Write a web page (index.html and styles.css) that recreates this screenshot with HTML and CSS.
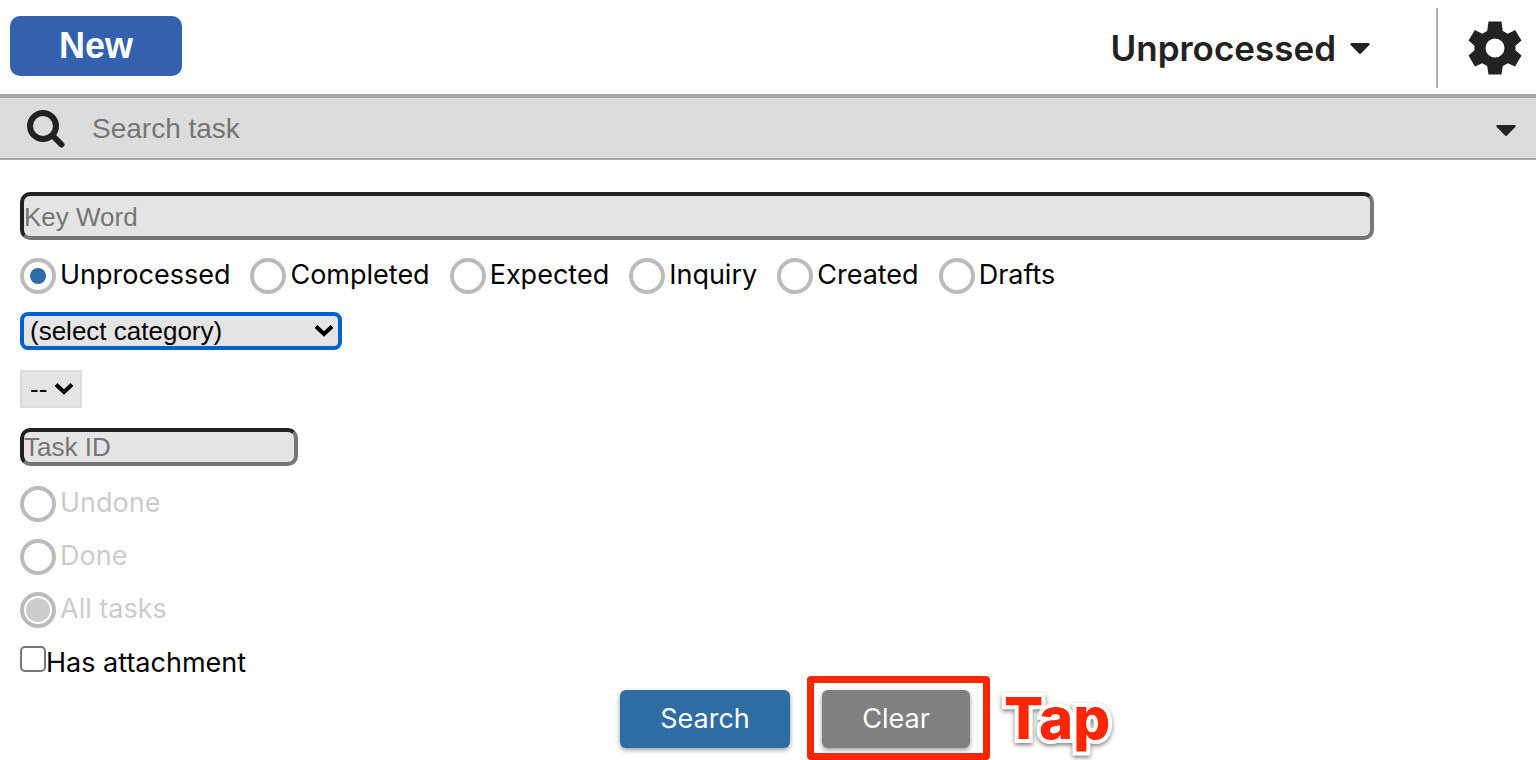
FILE: index.html
```html
<!DOCTYPE html>
<html lang="en">
<head>
<meta charset="utf-8">
<title>Tasks</title>
<link rel="stylesheet" href="styles.css">
</head>
<body>
<header class="topbar">
  <button class="new-button" type="button">New</button>
  <button class="folder-button" type="button">Unprocessed
    <svg class="caret" viewBox="0 0 20 11" aria-hidden="true"><path d="M1.500 0h17a1.200 1.200 0 0 1 .8 2.100l-8.300 8.400a1.500 1.500 0 0 1-2 0L.7 2.100A1.200 1.200 0 0 1 1.500 0z"/></svg>
  </button>
  <button class="settings-button" type="button" aria-label="Settings">
    <svg class="gear" viewBox="0 0 54 54" aria-hidden="true"><path fill-rule="evenodd" d="M20.500 0.500h13l1.300 9.500 5 2.800 7.300-3.700 6.400 10.400-6 5.200v4.600l6 5.200-6.400 10.900-7.300-3.100-5 2.700-1.300 8.500h-13l-1.300-8.500-5-2.700-7.300 3.100-6.400-10.900 6-5.200v-4.600l-6-5.200 6.400-10.400 7.300 3.700 5-2.800zM27 17.500a9.500 9.500 0 1 0 0 19a9.500 9.500 0 1 0 0-19z"/></svg>
  </button>
</header>

<div class="searchbar">
  <svg class="magnifier" viewBox="0 0 40 40" aria-hidden="true"><circle cx="17" cy="17" r="13"/><path d="M27 27l8.500 8.500"/></svg>
  <input class="search-input" type="text" placeholder="Search task" aria-label="Search task">
  <button class="expand-button" type="button" aria-label="Search options">
    <svg class="caret" viewBox="0 0 20 11" aria-hidden="true"><path d="M1.500 0h17a1.200 1.200 0 0 1 .8 2.100l-8.300 8.400a1.500 1.500 0 0 1-2 0L.7 2.100A1.200 1.200 0 0 1 1.500 0z"/></svg>
  </button>
</div>

<form class="filters">
  <input class="field field-keyword" type="text" placeholder="Key Word" aria-label="Key Word">

  <div class="folder-options">
    <label class="option"><input class="radio" type="radio" name="folder" checked>Unprocessed</label>
    <label class="option"><input class="radio" type="radio" name="folder">Completed</label>
    <label class="option"><input class="radio" type="radio" name="folder">Expected</label>
    <label class="option"><input class="radio" type="radio" name="folder">Inquiry</label>
    <label class="option"><input class="radio" type="radio" name="folder">Created</label>
    <label class="option"><input class="radio" type="radio" name="folder">Drafts</label>
  </div>

  <div class="select-box">
    <select class="select select-category" aria-label="Category"><option>(select category)</option></select>
    <svg class="chevron" viewBox="0 0 20 14" aria-hidden="true"><path d="M2 2.500l8 7.500 8-7.500"/></svg>
  </div>

  <div class="select-box">
    <select class="select select-app" aria-label="Process"><option>--</option></select>
    <svg class="chevron" viewBox="0 0 20 14" aria-hidden="true"><path d="M2 2.500l8 7.500 8-7.500"/></svg>
  </div>

  <input class="field field-id" type="text" placeholder="Task ID" aria-label="Task ID">

  <div class="status-options">
    <label class="option option-disabled"><input class="radio" type="radio" name="status" disabled>Undone</label>
    <label class="option option-disabled"><input class="radio" type="radio" name="status" disabled>Done</label>
    <label class="option option-disabled"><input class="radio" type="radio" name="status" checked disabled>All tasks</label>
  </div>

  <label class="attachment"><input class="checkbox" type="checkbox">Has attachment</label>

  <div class="actions">
    <button class="action action-search" type="button">Search</button>
    <div class="clear-box">
      <button class="action action-clear" type="reset">Clear</button>
      <span class="highlight"></span>
      <span class="hint">Tap</span>
    </div>
  </div>
</form>
</body>
</html>
```
FILE: styles.css
```css
* {
  box-sizing: border-box;
}

body {
  margin: 0;
  background: #fff;
  color: #000;
  font: 27px/36px Inter, "Liberation Sans", sans-serif;
}

button,
input,
select {
  margin: 0;
  font-family: "Liberation Sans", Arial, sans-serif;
}

button {
  border: 0;
  background: none;
  padding: 0;
}

.topbar {
  display: flex;
  align-items: flex-start;
  height: 94px;
  padding: 8px 14px 0 10px;
}

.new-button {
  width: 172px;
  height: 60px;
  margin: 8px auto 0 0;
  border-radius: 10px;
  background: #3361ad;
  color: #fff;
  font-size: 36px;
  font-weight: 700;
}

.folder-button {
  display: flex;
  align-items: center;
  gap: 14px;
  height: 80px;
  margin-right: 66px;
  color: #222;
  font: 600 35px/44px Inter, "Liberation Sans", sans-serif;
}

.caret {
  width: 20px;
  height: 11px;
  fill: #222;
}

.settings-button {
  display: flex;
  align-items: center;
  height: 80px;
  padding-left: 30px;
  border-left: 2px solid #b0b0b0;
}

.gear {
  width: 54px;
  height: 54px;
  fill: #222;
}

.searchbar {
  display: flex;
  align-items: center;
  height: 66px;
  padding: 2px 20px 0 26px;
  border-top: 4px solid #aaa;
  border-bottom: 2px solid #aaa;
  background: #dcdcdc;
}

.magnifier {
  width: 40px;
  height: 40px;
  fill: none;
  stroke: #222;
  stroke-width: 6;
  stroke-linecap: round;
}

.search-input {
  flex: 1;
  height: 56px;
  margin-left: 24px;
  padding: 0 2px;
  border: 0;
  background: transparent;
  font-size: 28px;
}

.expand-button {
  display: flex;
  padding-top: 2px;
}

::placeholder {
  color: #757575;
  opacity: 1;
}

.filters {
  display: flex;
  flex-direction: column;
  align-items: flex-start;
  padding: 32px 20px 12px;
}

.field {
  box-sizing: content-box;
  padding: 0;
  border: 4px solid #767676;
  border-color: #222 #767676 #767676 #222;
  border-radius: 10px;
  background: #e4e4e4;
  font-size: 26px;
}

.field-keyword {
  width: 90%;
  height: 38px;
  padding-top: 2px;
}

.field-id {
  width: 270px;
  height: 30px;
  margin-bottom: 20px;
}

.folder-options {
  display: flex;
  flex-wrap: wrap;
  gap: 20px;
  margin: 18px 0;
}

.option {
  display: flex;
  align-items: flex-start;
  gap: 4px;
  line-height: 34px;
}

.option-disabled {
  color: #ccc;
}

.radio {
  appearance: none;
  display: grid;
  place-content: center;
  width: 36px;
  height: 36px;
  border: 4px solid #bbb;
  border-radius: 50%;
  background: #fff;
}

.radio:checked::before {
  content: "";
  width: 16px;
  height: 16px;
  border-radius: 50%;
  background: #2e6da4;
}

.radio:disabled:checked::before {
  width: 24px;
  height: 24px;
  background: #ccc;
}

.select-box {
  position: relative;
  display: flex;
  margin-bottom: 20px;
}

.select {
  appearance: none;
  height: 38px;
  background: #e4e4e4;
  color: #000;
  font-size: 26px;
}

.select-category {
  width: 322px;
  padding: 0 6px;
  border: 4px solid #0060d0;
  border-radius: 8px;
}

.select-app {
  width: 62px;
  padding: 0 8px;
  border: 2px solid #dcdcdc;
  border-radius: 0;
}

.chevron {
  position: absolute;
  top: 12px;
  right: 8px;
  width: 20px;
  height: 14px;
  fill: none;
  stroke: #000;
  stroke-width: 4;
  pointer-events: none;
}

.status-options {
  display: grid;
  gap: 17px;
  margin-bottom: 18px;
}

.attachment {
  display: flex;
  align-items: flex-start;
  line-height: 34px;
}

.checkbox {
  appearance: none;
  width: 26px;
  height: 26px;
  border: 2px solid #767676;
  border-radius: 5px;
  background: #fff;
}

.actions {
  display: flex;
  align-self: center;
  gap: 32px;
  padding-left: 54px;
  margin-top: 10px;
}

.action {
  height: 58px;
  border-radius: 6px;
  color: #fff;
  font: 27px/56px Inter, "Liberation Sans", sans-serif;
  box-shadow: 0 2px 5px rgba(0, 0, 0, 0.4);
}

.action-search {
  width: 170px;
  background: #2e6da4;
}

.action-clear {
  width: 148px;
  background: #808080;
}

.clear-box {
  position: relative;
}

.clear-box .action {
  display: block;
}

.highlight {
  position: absolute;
  top: -14px;
  right: -20px;
  bottom: -12px;
  left: -15px;
  border: 7px solid #ff2600;
  border-radius: 4px;
  pointer-events: none;
}

.hint {
  position: absolute;
  top: -4px;
  left: 182px;
  color: #ff2600;
  font: 800 58px/64px Inter, "Liberation Sans", sans-serif;
  -webkit-text-stroke: 8px #fff;
  stroke-linejoin: round;
  paint-order: stroke fill;
  filter: drop-shadow(0 2px 2px rgba(0, 0, 0, 0.5));
}
```
